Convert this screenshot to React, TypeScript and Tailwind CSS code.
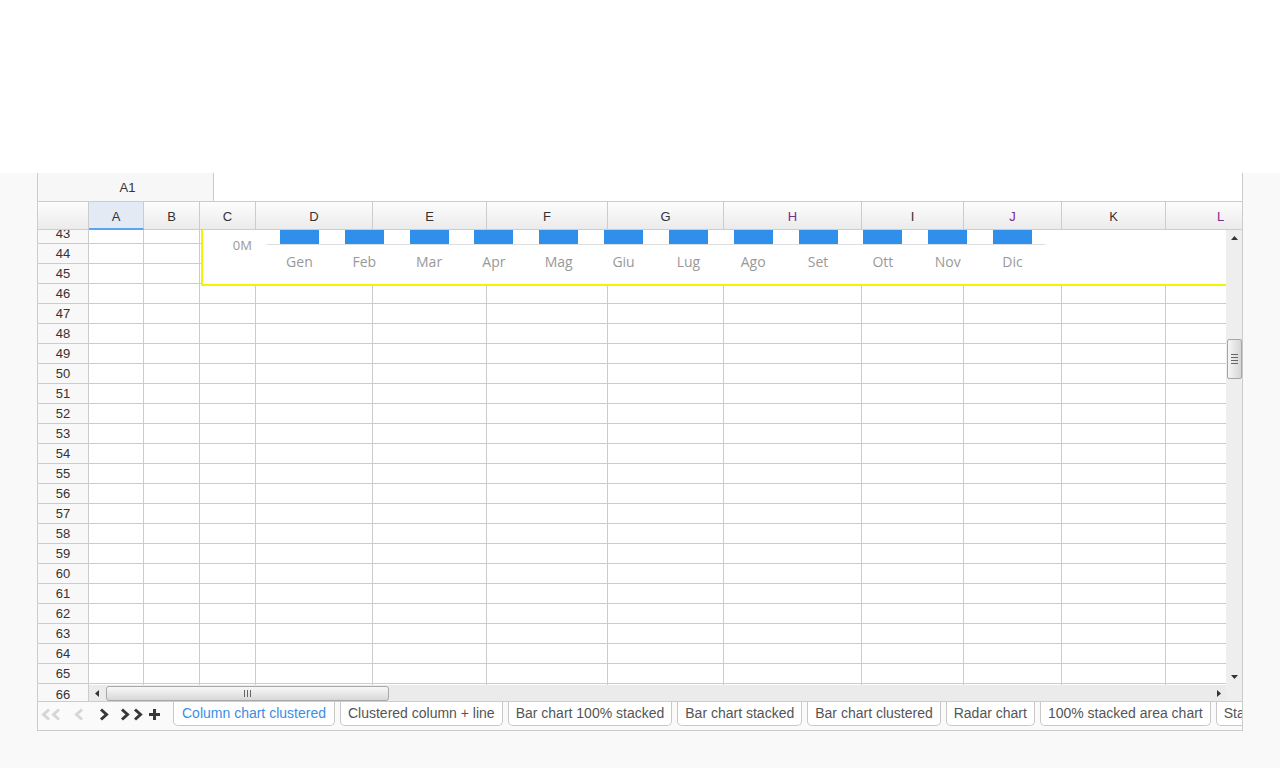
import React from 'react';

const COLUMNS = ['A', 'B', 'C', 'D', 'E', 'F', 'G', 'H', 'I', 'J', 'K', 'L'];
const PURPLE_HEADERS = ['H', 'J', 'L'];
const GRID =
  'grid grid-cols-[51px_55px_56px_56px_117px_114px_121px_116px_138px_102px_98px_104px_110px]';
const ROWS = Array.from({ length: 24 }, (_, i) => 43 + i);
const MONTHS = ['Gen', 'Feb', 'Mar', 'Apr', 'Mag', 'Giu', 'Lug', 'Ago', 'Set', 'Ott', 'Nov', 'Dic'];
const TABS = [
  'Column chart clustered',
  'Clustered column + line',
  'Bar chart 100% stacked',
  'Bar chart stacked',
  'Bar chart clustered',
  'Radar chart',
  '100% stacked area chart',
  'Stacked area chart',
];

function Chevron({ dir, color }: { dir: 'left' | 'right'; color: string }) {
  const points = dir === 'left' ? '8,1.5 2.5,6.5 8,11.5' : '2,1.5 7.5,6.5 2,11.5';
  return (
    <svg width="10" height="13" viewBox="0 0 10 13">
      <polyline points={points} fill="none" stroke={color} strokeWidth="3" />
    </svg>
  );
}

function ColumnHeader() {
  return (
    <div className={`${GRID} h-[28px]`}>
      <div className="border-r border-b border-[#ccc] bg-linear-to-b from-[#fdfdfd] to-[#ebebeb]" />
      {COLUMNS.map((c) => (
        <div
          key={c}
          className={
            c === 'A'
              ? 'flex items-center justify-center border-r border-b-2 border-r-[#ccc] border-b-[#5aa5f0] bg-[#e3eaf4] pt-[3px] text-[13px] text-[#333]'
              : PURPLE_HEADERS.includes(c)
                ? 'flex items-center justify-center border-r border-b border-[#ccc] bg-linear-to-b from-[#fdfdfd] to-[#ebebeb] pt-[2px] text-[13px] text-[#7a2b93]'
                : 'flex items-center justify-center border-r border-b border-[#ccc] bg-linear-to-b from-[#fdfdfd] to-[#ebebeb] pt-[2px] text-[13px] text-[#333]'
          }
        >
          {c}
        </div>
      ))}
    </div>
  );
}

function Chart() {
  return (
    <div className="absolute top-0 left-[163px] flex h-[56px] w-[1025px] border-b-2 border-l-2 border-[#f4f400] bg-white font-['Open_Sans',sans-serif]">
      <div className="w-[64px] shrink-0 pt-[5px] pr-[15px] text-right text-[13px] leading-[20px] text-[#999]">
        0M
      </div>
      <div className="flex w-[778px] shrink-0 flex-col">
        <div className="flex h-[15px] border-b border-[#ddd]">
          {MONTHS.map((m) => (
            <div key={m} className="flex flex-1 justify-center">
              <div className="h-[14px] w-[39px] bg-[#2f8fea]" />
            </div>
          ))}
        </div>
        <div className="flex pt-[7px]">
          {MONTHS.map((m) => (
            <div key={m} className="flex-1 text-center text-[14px] leading-[20px] text-[#999]">
              {m}
            </div>
          ))}
        </div>
      </div>
    </div>
  );
}

function VScroll() {
  return (
    <div className="flex w-[16px] shrink-0 flex-col bg-[#eeeeee]">
      <div className="flex h-[16px] items-center justify-center">
        <svg width="7" height="4" viewBox="0 0 7 4">
          <path d="M0 4 L3.5 0 L7 4 Z" fill="#333" />
        </svg>
      </div>
      <div className="flex-1">
        <div className="mx-auto mt-[93px] flex h-[40px] w-[15px] flex-col items-center justify-center gap-[2px] rounded-[2px] border border-[#a5a5a5] bg-linear-to-r from-[#f6f6f6] to-[#d6d6d6]">
          <div className="h-px w-[7px] bg-[#666]" />
          <div className="h-px w-[7px] bg-[#666]" />
          <div className="h-px w-[7px] bg-[#666]" />
          <div className="h-px w-[7px] bg-[#666]" />
        </div>
      </div>
      <div className="flex h-[16px] items-center justify-center">
        <svg width="7" height="4" viewBox="0 0 7 4">
          <path d="M0 0 L3.5 4 L7 0 Z" fill="#333" />
        </svg>
      </div>
    </div>
  );
}

function HScroll() {
  return (
    <div className="flex min-w-0 flex-1 items-center bg-[#ebebeb]">
      <div className="flex w-[16px] shrink-0 items-center justify-center">
        <svg width="4" height="7" viewBox="0 0 4 7">
          <path d="M4 0 L0 3.5 L4 7 Z" fill="#333" />
        </svg>
      </div>
      <div className="ml-[1px] flex h-[15px] w-[283px] shrink-0 items-center justify-center gap-[2px] rounded-[3px] border border-[#a8a8a8] bg-linear-to-b from-[#f8f8f8] to-[#d8d8d8]">
        <div className="h-[7px] w-px bg-[#666]" />
        <div className="h-[7px] w-px bg-[#666]" />
        <div className="h-[7px] w-px bg-[#666]" />
      </div>
      <div className="flex-1" />
      <div className="flex w-[16px] shrink-0 items-center justify-center pl-[2px]">
        <svg width="4" height="7" viewBox="0 0 4 7">
          <path d="M0 0 L4 3.5 L0 7 Z" fill="#333" />
        </svg>
      </div>
    </div>
  );
}

function SheetTabs() {
  return (
    <div className="flex h-[29px] items-start overflow-hidden border-t border-[#ccc] bg-[#fafafa]">
      <div className="flex h-[24px] shrink-0 items-center pl-[3px]">
        <div className="flex">
          <Chevron dir="left" color="#d6d6d6" />
          <Chevron dir="left" color="#d6d6d6" />
        </div>
        <div className="ml-[13px]">
          <Chevron dir="left" color="#d6d6d6" />
        </div>
        <div className="ml-[15px]">
          <Chevron dir="right" color="#383838" />
        </div>
        <div className="ml-[11px] flex">
          <Chevron dir="right" color="#383838" />
          <div className="ml-[3px]">
            <Chevron dir="right" color="#383838" />
          </div>
        </div>
        <svg className="ml-[5px]" width="13" height="13" viewBox="0 0 13 13">
          <path d="M6.5 1 V12 M1 6.5 H12" stroke="#383838" strokeWidth="3" />
        </svg>
      </div>
      <div className="ml-[12px] flex gap-[5px]">
        {TABS.map((t, i) => (
          <div
            key={t}
            className={
              i === 0
                ? 'h-[24px] shrink-0 whitespace-nowrap rounded-b-[5px] border border-t-0 border-[#c8c8c8] bg-white px-[8px] text-[14px] leading-[23px] text-[#3b8ee3]'
                : 'h-[24px] shrink-0 whitespace-nowrap rounded-b-[5px] border border-t-0 border-[#c8c8c8] bg-white px-[7px] text-[14px] leading-[23px] text-[#555]'
            }
          >
            {t}
          </div>
        ))}
      </div>
    </div>
  );
}

export default function App() {
  return (
    <div className="min-h-screen bg-[#f9f9f9] font-['Liberation_Sans',Arial,sans-serif]">
      <div className="h-[173px] bg-white" />
      <div className="ml-[37px] w-[1206px] border-x border-b border-[#ccc]">
        {/* name box */}
        <div className="flex h-[29px] border-b border-[#ccc] bg-white">
          <div className="flex w-[176px] items-center justify-center border-r border-[#ccc] bg-[#f7f7f7] pt-[2px] pl-[4px] text-[13px] text-[#333]">
            A1
          </div>
        </div>

        <div className="overflow-hidden">
          <ColumnHeader />
        </div>

        <div className="flex h-[455px]">
          <div className="relative min-w-0 flex-1 overflow-hidden">
            <div className="-mt-[6px]">
              {ROWS.map((r) => (
                <div key={r} className={`${GRID} h-[20px]`}>
                  <div className="overflow-hidden border-r border-b border-[#ccc] bg-[#f8f8f8] pt-[1px] text-center text-[13px] leading-[18px] text-[#333]">
                    {r}
                  </div>
                  {COLUMNS.map((c) => (
                    <div key={c} className="border-r border-b border-[#ccc] bg-white" />
                  ))}
                </div>
              ))}
            </div>
            <Chart />
          </div>
          <VScroll />
        </div>

        <div className="flex h-[16px]">
          <div className="w-[51px] shrink-0 border-r border-[#ccc] bg-[#f8f8f8] pt-[1px] text-center text-[13px] leading-[17px] text-[#333]">
            66
          </div>
          <HScroll />
          <div className="w-[16px] shrink-0 bg-[#eeeeee]" />
        </div>

        <SheetTabs />
      </div>
    </div>
  );
}
